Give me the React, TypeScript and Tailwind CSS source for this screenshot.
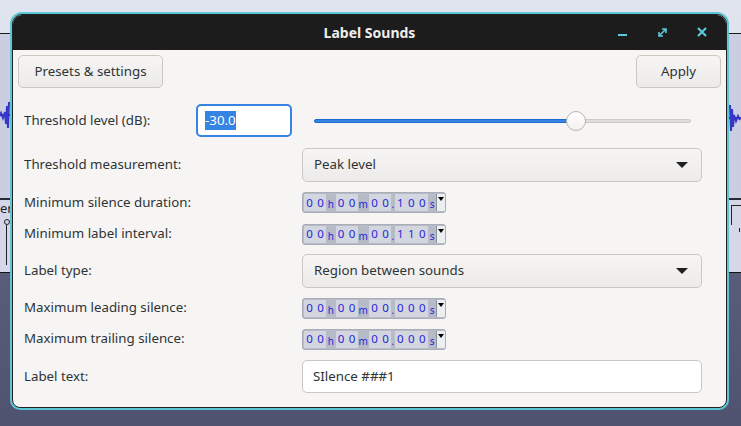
import React from 'react';

const font = { fontFamily: '"Noto Sans", "DejaVu Sans", sans-serif' };

function Digits({ d }: { d: string }) {
  return (
    <div className="flex h-full items-center bg-[#d3d6df]">
      {d.split('').map((c, i) => (
        <span key={i} className="w-[11px] text-center text-[11.5px] leading-none text-[#2626d8]">
          {c}
        </span>
      ))}
    </div>
  );
}

function Unit({ u, w }: { u: string; w: string }) {
  return (
    <div className={`flex h-full items-end justify-center pb-[2px] text-[10px] leading-none text-[#2626d8] ${w}`}>
      {u}
    </div>
  );
}

function TimeField({ h, m, s, ms }: { h: string; m: string; s: string; ms: string }) {
  return (
    <div className="flex h-[21px] w-[144px] items-stretch overflow-hidden rounded-[3px] border border-[#a9adb8] bg-[#b7bbc7] py-[1px] pl-[1px]">
      <Digits d={h} />
      <Unit u="h" w="w-[10px]" />
      <Digits d={m} />
      <Unit u="m" w="w-[12px]" />
      <Digits d={s} />
      <Unit u="." w="w-[4px]" />
      <Digits d={ms} />
      <Unit u="s" w="w-[9px]" />
      <div className="relative w-[9px] border-l border-[#8e929c] bg-[#eceef2]">
        <div className="absolute left-[1px] top-[3px] h-0 w-0 border-x-[3.5px] border-t-[4px] border-x-transparent border-t-black" />
      </div>
    </div>
  );
}

function Dropdown({ text }: { text: string }) {
  return (
    <div className="flex h-[34px] w-[400px] items-center justify-between rounded-[5px] border border-[#cdc7c2] bg-gradient-to-b from-[#f6f5f4] to-[#edebe9] pl-[11px] pr-[13px] text-[13.3px] text-[#2e3436]">
      <span>{text}</span>
      <div className="h-0 w-0 border-x-[6px] border-t-[6px] border-x-transparent border-t-[#1f1f1f]" />
    </div>
  );
}

function Label({ children }: { children: React.ReactNode }) {
  return <div className="w-[287px] shrink-0 pl-[9px] text-[13.3px] text-[#2e3436]">{children}</div>;
}

function Wave({ flip }: { flip?: boolean }) {
  return (
    <svg width="12" height="34" viewBox="0 0 12 34">
      <path d="M0 17 H12" stroke="#3a3acb" strokeWidth="2" />
      <path
        d={flip ? 'M1 4 L2 30 L3 8 L4 26 L5 14 L7 20 L9 15 L11 19' : 'M11 4 L10 30 L9 8 L8 26 L7 14 L5 20 L3 15 L1 19'}
        stroke="#3636c8"
        strokeWidth="2"
        fill="none"
      />
    </svg>
  );
}

export default function App() {
  return (
    <div className="relative h-[426px] w-[741px] overflow-hidden bg-[#565a77]" style={font}>
      {/* desktop behind the dialog */}
      <div className="absolute left-0 top-0 h-[198px] w-full bg-gradient-to-b from-[#e1e5ef] to-[#d3d6e6]" />
      <div className="absolute left-0 top-[33px] h-[1px] w-full bg-[#1a1a1a]" />
      <div className="absolute left-0 top-[34px] h-[164px] w-full bg-[#cbcde1]" />
      <div className="absolute left-0 top-[198px] h-[2px] w-full bg-[#2a2a36]" />
      <div className="absolute left-0 top-[200px] h-[72px] w-full bg-[#d5d7e8]" />
      <div className="absolute left-0 top-[272px] h-[1px] w-full bg-[#111]" />
      <div className="absolute left-0 top-[273px] h-[153px] w-full bg-gradient-to-b from-[#595d7a] to-[#4f5370]" />
      <div className="absolute left-[-2px] top-[98px]">
        <Wave />
      </div>
      <div className="absolute left-[729px] top-[101px]">
        <Wave flip />
      </div>
      <div className="absolute left-0 top-[202px] text-[13px] leading-none text-[#222]">er</div>
      <div className="absolute left-[4px] top-[219px] h-[6px] w-[6px] rounded-full border border-[#222]" />
      <div className="absolute left-[6px] top-[225px] h-[40px] w-[1px] bg-[#222]" />
      <div className="absolute left-[731px] top-[205px] h-[20px] w-[1px] bg-[#222]" />
      <div className="absolute left-[731px] top-[205px] h-[1px] w-[10px] bg-[#222]" />
      <div className="absolute left-[739px] top-[228px] h-[4px] w-[1px] bg-[#222]" />

      {/* dialog window */}
      <div className="absolute left-[10px] top-[12px] h-[398px] w-[719px] rounded-t-[12px] rounded-b-[10px] bg-[#5bc6d6] p-[2px]">
        <div className="flex h-full w-full flex-col overflow-hidden rounded-t-[10px] rounded-b-[8px] border border-[#222] bg-[#f6f5f4]">
          <div className="relative flex h-[35px] shrink-0 items-center justify-center bg-[#1c1c1c]">
            <span className="text-[14px] font-bold text-[#eeeeec]">Label Sounds</span>
            <div className="absolute left-[605px] top-[19px] h-[2px] w-[9px] bg-[#5bc8d8]" />
            <svg className="absolute left-[644px] top-[12px]" width="11" height="11" viewBox="0 0 11 11">
              <path d="M2 9 L9 2" stroke="#5bc8d8" strokeWidth="1.6" />
              <path d="M5 2 H9 V6" stroke="#5bc8d8" strokeWidth="1.6" fill="none" />
              <path d="M2 5 V9 H6" stroke="#5bc8d8" strokeWidth="1.6" fill="none" />
            </svg>
            <svg className="absolute left-[684px] top-[12px]" width="10" height="10" viewBox="0 0 10 10">
              <path d="M1 1 L9 9 M9 1 L1 9" stroke="#5bc8d8" strokeWidth="2.2" />
            </svg>
          </div>

          <div className="flex flex-col pl-[5px] pr-[5px] pt-[5px]">
            <div className="flex justify-between">
              <button className="h-[33px] w-[145px] rounded-[5px] border border-[#cdc7c2] bg-gradient-to-b from-[#f6f5f4] to-[#edebe9] text-[13.3px] text-[#2e3436]">
                Presets &amp; settings
              </button>
              <button className="h-[33px] w-[85px] rounded-[5px] border border-[#cdc7c2] bg-gradient-to-b from-[#f6f5f4] to-[#edebe9] text-[13.3px] text-[#2e3436]">
                Apply
              </button>
            </div>
          </div>

          <div className="flex flex-col px-[2px]">
            <div className="mt-[16px] flex h-[33px] items-center">
              <div className="w-[181px] shrink-0 pl-[9px] text-[13.3px] text-[#2e3436]">Threshold level (dB):</div>
              <div className="flex h-[33px] w-[96px] items-center rounded-[5px] border-2 border-[#3584e4] bg-white pl-[7px] text-[13.3px]">
                <span className="bg-[#3584e4] leading-[19px] text-white">-30.0</span>
              </div>
              <div className="relative ml-[22px] h-[20px] w-[377px]">
                <div className="absolute left-0 top-[8px] h-[4px] w-full rounded-full border border-[#cfcac5] bg-[#deddda]" />
                <div className="absolute left-0 top-[8px] h-[4px] w-[264px] rounded-full border border-[#1c6bd0] bg-[#3584e4]" />
                <div className="absolute left-[252px] top-0 h-[20px] w-[20px] rounded-full border border-[#bab4ae] bg-gradient-to-b from-white to-[#f3f2f1]" />
              </div>
            </div>

            <div className="mt-[11px] flex h-[34px] items-center">
              <Label>Threshold measurement:</Label>
              <Dropdown text="Peak level" />
            </div>

            <div className="mt-[10px] flex h-[21px] items-center">
              <Label>Minimum silence duration:</Label>
              <TimeField h="00" m="00" s="00" ms="100" />
            </div>

            <div className="mt-[10px] flex h-[22px] items-center">
              <Label>Minimum label interval:</Label>
              <TimeField h="00" m="00" s="00" ms="110" />
            </div>

            <div className="mt-[9px] flex h-[34px] items-center">
              <Label>Label type:</Label>
              <Dropdown text="Region between sounds" />
            </div>

            <div className="mt-[10px] flex h-[20px] items-center">
              <Label>Maximum leading silence:</Label>
              <TimeField h="00" m="00" s="00" ms="000" />
            </div>

            <div className="mt-[11px] flex h-[20px] items-center">
              <Label>Maximum trailing silence:</Label>
              <TimeField h="00" m="00" s="00" ms="000" />
            </div>

            <div className="mt-[11px] flex h-[33px] items-center">
              <Label>Label text:</Label>
              <div className="flex h-[33px] w-[400px] items-center rounded-[5px] border border-[#cdc7c2] bg-white pl-[10px] text-[13.3px] text-[#2e3436]">
                SIlence ###1
              </div>
            </div>
          </div>
        </div>
      </div>
    </div>
  );
}
